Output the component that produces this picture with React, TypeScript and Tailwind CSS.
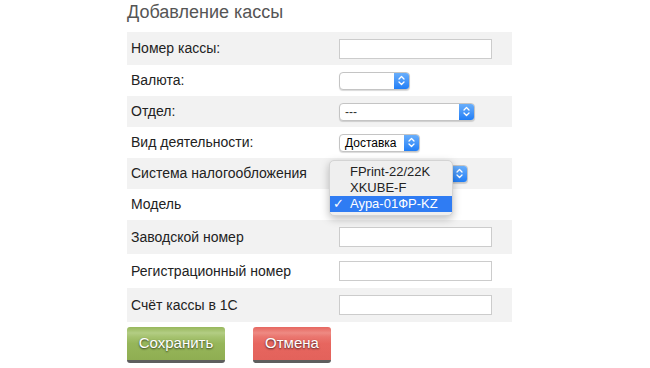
import React from 'react';

const font = { fontFamily: '"Liberation Sans", Arial, sans-serif' };

const Chevrons = () => (
  <svg width="7" height="11" viewBox="0 0 7 11" fill="none" stroke="white" strokeWidth="1.3" strokeLinecap="round" strokeLinejoin="round">
    <path d="M1 4 L3.5 1.5 L6 4" />
    <path d="M1 7 L3.5 9.5 L6 7" />
  </svg>
);

const PopupSelect = ({ width, value, textClass }: { width: string; value?: string; textClass?: string }) => (
  <div className={`${width} h-[18px] flex rounded-[4px] border border-[#c4c4c4] bg-white shadow-[0_1px_1px_rgba(0,0,0,0.15)] overflow-hidden`}>
    <div className={`flex-1 flex items-center pl-[5px] leading-none ${textClass ?? ''}`}>{value}</div>
    <div className="w-[15px] flex items-center justify-center bg-gradient-to-b from-[#68aefb] to-[#1f7ef6]">
      <Chevrons />
    </div>
  </div>
);

const TextInput = () => (
  <div className="w-[153px] h-[20px] border border-[#cccccc] bg-white" />
);

const Row = ({ label, grey, height, children }: { label: string; grey?: boolean; height: string; children?: React.ReactNode }) => (
  <div className={`flex items-center ${height} ${grey ? 'bg-[#f2f2f2]' : 'bg-white'}`}>
    <div className="w-[212px] pl-[4px] text-[14px] text-[#222]">{label}</div>
    <div className="relative flex items-center">{children}</div>
  </div>
);

// open popup menu of the "Модель" select, drawn over the rows above it
const ModelMenu = () => (
  <div className="absolute left-[-10px] top-[-45px] w-[124px] rounded-[5px] bg-[#efefef] border border-[#d4d4d4] shadow-[0_3px_8px_rgba(0,0,0,0.25)] pt-[3px] pb-[3px] text-[13px] text-[#222] z-10">
    <div className="h-[16px] pl-[20px] flex items-center">FPrint-22/22K</div>
    <div className="h-[16px] pl-[20px] flex items-center">XKUBE-F</div>
    <div className="h-[16px] flex items-center bg-[#2f7cf3] text-white">
      <span className="w-[20px] pl-[3px] text-[13px] font-bold" style={{ fontFamily: '"DejaVu Sans", sans-serif' }}>✓</span>
      <span>Аура-01ФР-KZ</span>
    </div>
  </div>
);

export default function App() {
  return (
    <div className="min-h-screen bg-white" style={font}>
      <div className="ml-[127px] w-[385px]">
        <h2 className="mt-[2px] mb-[10px] text-[18px] leading-[20px] text-[#555]">Добавление кассы</h2>
        <div>
          <Row label="Номер кассы:" grey height="h-[33px]"><TextInput /></Row>
          <Row label="Валюта:" height="h-[31px]"><PopupSelect width="w-[71px]" /></Row>
          <Row label="Отдел:" grey height="h-[31px]"><PopupSelect width="w-[136px]" value="---" textClass="text-[12px] text-[#333]" /></Row>
          <Row label="Вид деятельности:" height="h-[31px]"><PopupSelect width="w-[81px]" value="Доставка" textClass="text-[12px] text-black" /></Row>
          <Row label="Система налогообложения" grey height="h-[31px]"><PopupSelect width="w-[129px]" /></Row>
          <Row label="Модель" height="h-[31px]"><ModelMenu /></Row>
          <Row label="Заводской номер" grey height="h-[34px]"><TextInput /></Row>
          <Row label="Регистрационный номер" height="h-[34px]"><TextInput /></Row>
          <Row label="Счёт кассы в 1С" grey height="h-[34px]"><TextInput /></Row>
        </div>
        <div className="mt-[5px] flex gap-[28px]">
          <button className="w-[98px] h-[36px] rounded-[3px] border-b-[3px] border-[#5e5e5e] text-white text-[15px] [text-shadow:0_1px_2px_rgba(0,0,0,0.7)] bg-[linear-gradient(to_bottom,#97b75b_0%,#b3cd84_18%,#a5c26f_30%,#96b65a_50%,#8fae52_100%)]">
            Сохранить
          </button>
          <button className="w-[78px] h-[36px] rounded-[3px] border-b-[3px] border-[#5e5e5e] text-white text-[15px] [text-shadow:0_1px_2px_rgba(0,0,0,0.7)] bg-[linear-gradient(to_bottom,#e66760_0%,#ee8a83_18%,#ea756e_30%,#e7665f_50%,#e3625b_100%)]">
            Отмена
          </button>
        </div>
      </div>
    </div>
  );
}
